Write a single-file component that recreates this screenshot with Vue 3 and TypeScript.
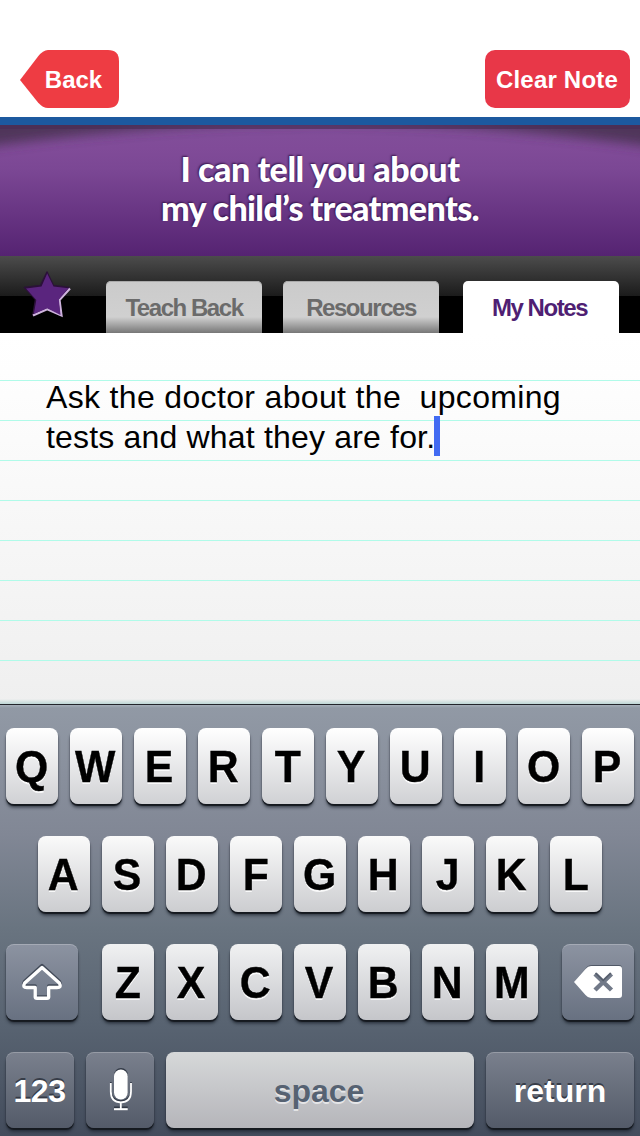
<script setup lang="ts">
import { ref } from 'vue'

const topRow: string[] = [...'QWERTYUIOP']
const middleRow: string[] = [...'ASDFGHJKL']
const bottomRow: string[] = [...'ZXCVBNM']
const tabs: string[] = ['Teach Back', 'Resources', 'My Notes']
const activeTab = ref('My Notes')
const noteLines = ref<string[]>(['Ask the doctor about the  upcoming', 'tests and what they are for.'])

function clearNote(): void {
  noteLines.value = ['']
}
</script>

<template>
  <main class="screen">
    <header class="navbar">
      <button class="back">
        <svg class="back-shape" width="99" height="58" viewBox="0 0 99 58">
          <path d="M0 30 L18 6.500 Q23 0 28 0 H88 Q99 0 99 11 V47 Q99 58 88 58 H28 Q23 58 18 52.500 Z" fill="#ee3c43" />
        </svg>
        <span class="back-label">Back</span>
      </button>
      <button class="clear" @click="clearNote">Clear Note</button>
    </header>

    <section class="banner">
      <svg class="banner-shade" width="640" height="131" viewBox="0 0 640 131">
        <defs>
          <filter id="soft" x="-10%" y="-100%" width="120%" height="300%">
            <feGaussianBlur stdDeviation="6" />
          </filter>
        </defs>
        <path d="M-30 -30 H670 V24 Q480 -3 320 -3 Q160 -3 -30 24 Z" fill="#47304f" opacity=".85" filter="url(#soft)" />
        <path d="M0 0 H640 V4 H0 Z" fill="#492d55" opacity=".65" />
      </svg>
      <h1 class="title">
        <span class="title-one">I can tell you about</span>
        <span class="title-two">my child’s treatments.</span>
      </h1>
    </section>

    <nav class="tabbar">
      <svg class="star" width="50" height="50" viewBox="0 0 50 50">
        <path d="M25 2 L31.500 15.500 L47 17.500 L37 29 L39.500 45 L25 38.500 L11 45 L13.500 29.500 L2.500 17.500 L18.500 15.500 Z" fill="#2b1139" stroke="#2b1139" stroke-width="1.500" stroke-linejoin="round" />
        <path d="M48 18.500 L37.500 30 L39.500 45.500 L25.200 39.200 L11 45.500" fill="none" stroke="#cdb2dc" stroke-width="2.200" />
        <path d="M25.200 3.500 L31.500 16.500 L46.500 18.300 L36.800 29.500 L38.500 45 L25.200 38.300 L11.800 44 L14.300 30 L4 18.600 L19.500 16.500 Z" fill="#5a257e" />
      </svg>
      <button
        v-for="tab in tabs"
        :key="tab"
        class="tab"
        :class="{ active: tab === activeTab }"
        @click="activeTab = tab"
      >{{ tab }}</button>
    </nav>

    <section class="note">
      <p class="note-text">
        <span v-for="(line, i) in noteLines" :key="i" class="note-line">{{ line }}<i v-if="i === noteLines.length - 1" class="caret"></i></span>
      </p>
    </section>

    <section class="keyboard">
      <div class="row">
        <button v-for="k in topRow" :key="k" class="key letter"><span class="glyph">{{ k }}</span></button>
      </div>
      <div class="row">
        <button v-for="k in middleRow" :key="k" class="key letter second"><span class="glyph">{{ k }}</span></button>
      </div>
      <div class="row spread">
        <button class="key dark side">
          <svg width="72" height="76" viewBox="0 0 72 76">
            <path d="M36 21.500 L53.500 37.500 Q56 42 51 42 H42.700 V51 Q42.700 53 41 53 H31 Q29.200 53 29.200 51 V42 H21 Q16 42 18.500 37.500 Z" fill="none" stroke="#434b59" stroke-width="3.400" stroke-linejoin="round" />
            <path d="M36 23.500 L53.300 39 Q56 43.500 51 43.500 H42.700 V52.500 Q42.700 54.300 41 54.300 H31 Q29.200 54.300 29.200 52.500 V43.500 H21 Q16 43.500 18.700 39 Z" fill="none" stroke="#fff" stroke-width="3.400" stroke-linejoin="round" />
          </svg>
        </button>
        <div class="group">
          <button v-for="k in bottomRow" :key="k" class="key letter third"><span class="glyph">{{ k }}</span></button>
        </div>
        <button class="key dark side">
          <svg width="72" height="76" viewBox="0 0 72 76">
            <path d="M13 37 L24 24 Q26 21 30 21 H57 Q60 21 60 24 V50 H27 Z" fill="#505866" />
            <path d="M12 38 L23.500 25 Q26 22 29 22 H57 Q60 22 60 25 V51 Q60 54 57 54 H29 Q26 54 23.500 51 Z" fill="#fff" />
            <path d="M33 30 L49.500 46 M49.500 30 L33 46" stroke="#717988" stroke-width="4.500" />
            <path d="M33.500 29 L41.200 36.500 L49 29" fill="none" stroke="#565e6c" stroke-width="1.500" />
          </svg>
        </button>
      </div>
      <div class="row">
        <button class="key dark low small digits">123</button>
        <button class="key dark low small">
          <svg width="68" height="76" viewBox="0 0 68 76">
            <rect x="28" y="16" width="14" height="30" rx="7" fill="#333a47" />
            <path d="M24.800 30 V38 Q24.800 48.500 34.800 49 Q45 48.500 45 38 V30" fill="none" stroke="#333a47" stroke-width="1.600" />
            <path d="M28 55.500 H41.700" stroke="#333a47" stroke-width="2" />
            <rect x="28" y="17.500" width="13.700" height="30" rx="6.850" fill="#fff" />
            <path d="M24.800 31 V39.500 Q24.800 50 34.800 50.500 Q45 50 45 39.500 V31 M34.800 50.500 V57" fill="none" stroke="#fff" stroke-width="1.800" />
            <path d="M28 57.200 H41.700" stroke="#fff" stroke-width="2" />
          </svg>
        </button>
        <button class="key space">space</button>
        <button class="key dark low return">return</button>
      </div>
    </section>
  </main>
</template>

<style>
body {
  margin: 0;
  background: #fff;
}
</style>

<style scoped>
.screen {
  width: 640px;
  height: 1136px;
  overflow: hidden;
  display: flex;
  flex-direction: column;
  font-family: "Liberation Sans", Arial, sans-serif;
}
button {
  border: 0;
  margin: 0;
  padding: 0;
  background: none;
  font-family: inherit;
  font-weight: bold;
  display: block;
  box-sizing: border-box;
  flex: none;
  white-space: nowrap;
}
svg {
  display: block;
}
.navbar {
  height: 125px;
  box-sizing: border-box;
  border-bottom: 8px solid #1c599f;
  padding: 50px 10px 0 20px;
  display: flex;
  justify-content: space-between;
  flex: none;
}
.back {
  width: 99px;
  height: 58px;
  display: grid;
  color: #fff;
  font-size: 24px;
  line-height: 59px;
}
.back-shape,
.back-label {
  grid-area: 1 / 1;
}
.back-label {
  z-index: 1;
  padding-left: 8px;
}
.clear {
  width: 145px;
  height: 58px;
  border-radius: 10px;
  background: #e83748;
  color: #fff;
  font-size: 24px;
  line-height: 59px;
  letter-spacing: .2px;
  padding-right: 1px;
}
.banner {
  height: 131px;
  flex: none;
  display: grid;
  background: linear-gradient(#824f9a 0, #804b98 24px, #7b4794 45px, #552372 131px);
}
.banner-shade,
.title {
  grid-area: 1 / 1;
}
.title {
  z-index: 1;
  margin: 0;
  padding-top: 24px;
  display: flex;
  flex-direction: column;
  align-items: center;
  font: 900 34px/39px Lato, sans-serif;
  color: #fff;
  text-shadow: -1px -1px 2px rgba(35, 5, 50, .75);
  white-space: nowrap;
}
.title-one {
  letter-spacing: -0.45px;
}
.title-two {
  letter-spacing: -0.6px;
}
.tabbar {
  height: 77px;
  flex: none;
  display: flex;
  align-items: flex-end;
  background: linear-gradient(#4c4c4c 0, #1b1b1b 40px, #000 40px);
}
.star {
  margin: 0 34px 13px 22px;
}
.tab {
  width: 156px;
  height: 52px;
  margin-right: 21px;
  border-radius: 5px 5px 0 0;
  background: linear-gradient(#cbcbcb 0, #d0d0d0 36px, #777 52px);
  box-shadow: inset 0 1px 0 #aaa;
  color: #6b6b6b;
  font-size: 24px;
  line-height: 54px;
  letter-spacing: -1.45px;
}
.tab.active {
  margin-left: 3px;
  padding-right: 3px;
  background: #fff;
  box-shadow: none;
  color: #4f1f73;
}
.note {
  height: 371px;
  flex: none;
  box-sizing: border-box;
  padding: 44px 0 0 46px;
  background:
    linear-gradient(rgba(190, 220, 220, 0), #bdd6d5) 0 100% / 100% 5px no-repeat,
    repeating-linear-gradient(transparent 0 39px, #b0fbe9 39px 40px) 0 8px / 100% 320px no-repeat,
    linear-gradient(#fff 0, #fefefe 40px, #efefef 100%);
}
.note-text {
  margin: 0;
  font-size: 32px;
  line-height: 40px;
  color: #000;
}
.note-line {
  display: flex;
  white-space: pre;
  letter-spacing: .34px;
}
.note-line:last-child {
  letter-spacing: .18px;
}
.caret {
  width: 6px;
  height: 40px;
  margin-top: -1px;
  margin-left: -1px;
  background: #426bf2;
}
.keyboard {
  height: 432px;
  flex: none;
  box-sizing: border-box;
  border-top: 1px solid #22242b;
  padding: 23px 6px 0;
  display: flex;
  flex-direction: column;
  gap: 32px;
  background: linear-gradient(#a5afb9 0, #9199a5 3px, #818795 130px, #697480 224px, #586371 320px, #434c5c 431px);
}
.row {
  height: 76px;
  display: flex;
  justify-content: center;
  gap: 12px;
}
.spread {
  justify-content: space-between;
}
.group {
  display: flex;
  gap: 12px;
}
.key {
  height: 76px;
  border-radius: 8px;
  box-shadow: 0 2px 1px #15191f, 0 4px 3px rgba(20, 26, 35, .5);
}
.letter {
  width: 52px;
  font-size: 45px;
  line-height: 78px;
  color: #000;
  text-shadow: 0 2px 0 rgba(255, 255, 255, .85);
  background: linear-gradient(#fff, #d0d1d4);
  display: flex;
  justify-content: center;
}
.glyph {
  display: block;
  margin-right: 1px;
  transform: scaleX(.95);
  -webkit-text-stroke: .4px #000;
}
.second {
  background: linear-gradient(#fafafa, #cccdd0);
}
.third {
  background: linear-gradient(#f0f1f2, #c5c6ca);
}
.dark {
  color: #fff;
  background: linear-gradient(#8c93a1, #687181);
  box-shadow: inset 0 1px 0 rgba(255, 255, 255, .22), 0 2px 1px #15191f, 0 4px 3px rgba(20, 26, 35, .5);
  text-shadow: 0 -2px 0 rgba(38, 43, 54, .75);
}
.low {
  background: linear-gradient(#7a808d, #545b69);
}
.side {
  width: 72px;
}
.small {
  width: 68px;
}
.digits {
  font-size: 32px;
  line-height: 79px;
  letter-spacing: -.5px;
  padding-right: 1px;
}
.space {
  width: 308px;
  color: #566272;
  font-size: 32px;
  line-height: 78px;
  text-shadow: 0 2px 0 rgba(255, 255, 255, .6);
  background: linear-gradient(#d6d8d9, #b5b5ba);
  padding-right: 2px;
}
.return {
  width: 148px;
  font-size: 32px;
  line-height: 78px;
}
</style>
